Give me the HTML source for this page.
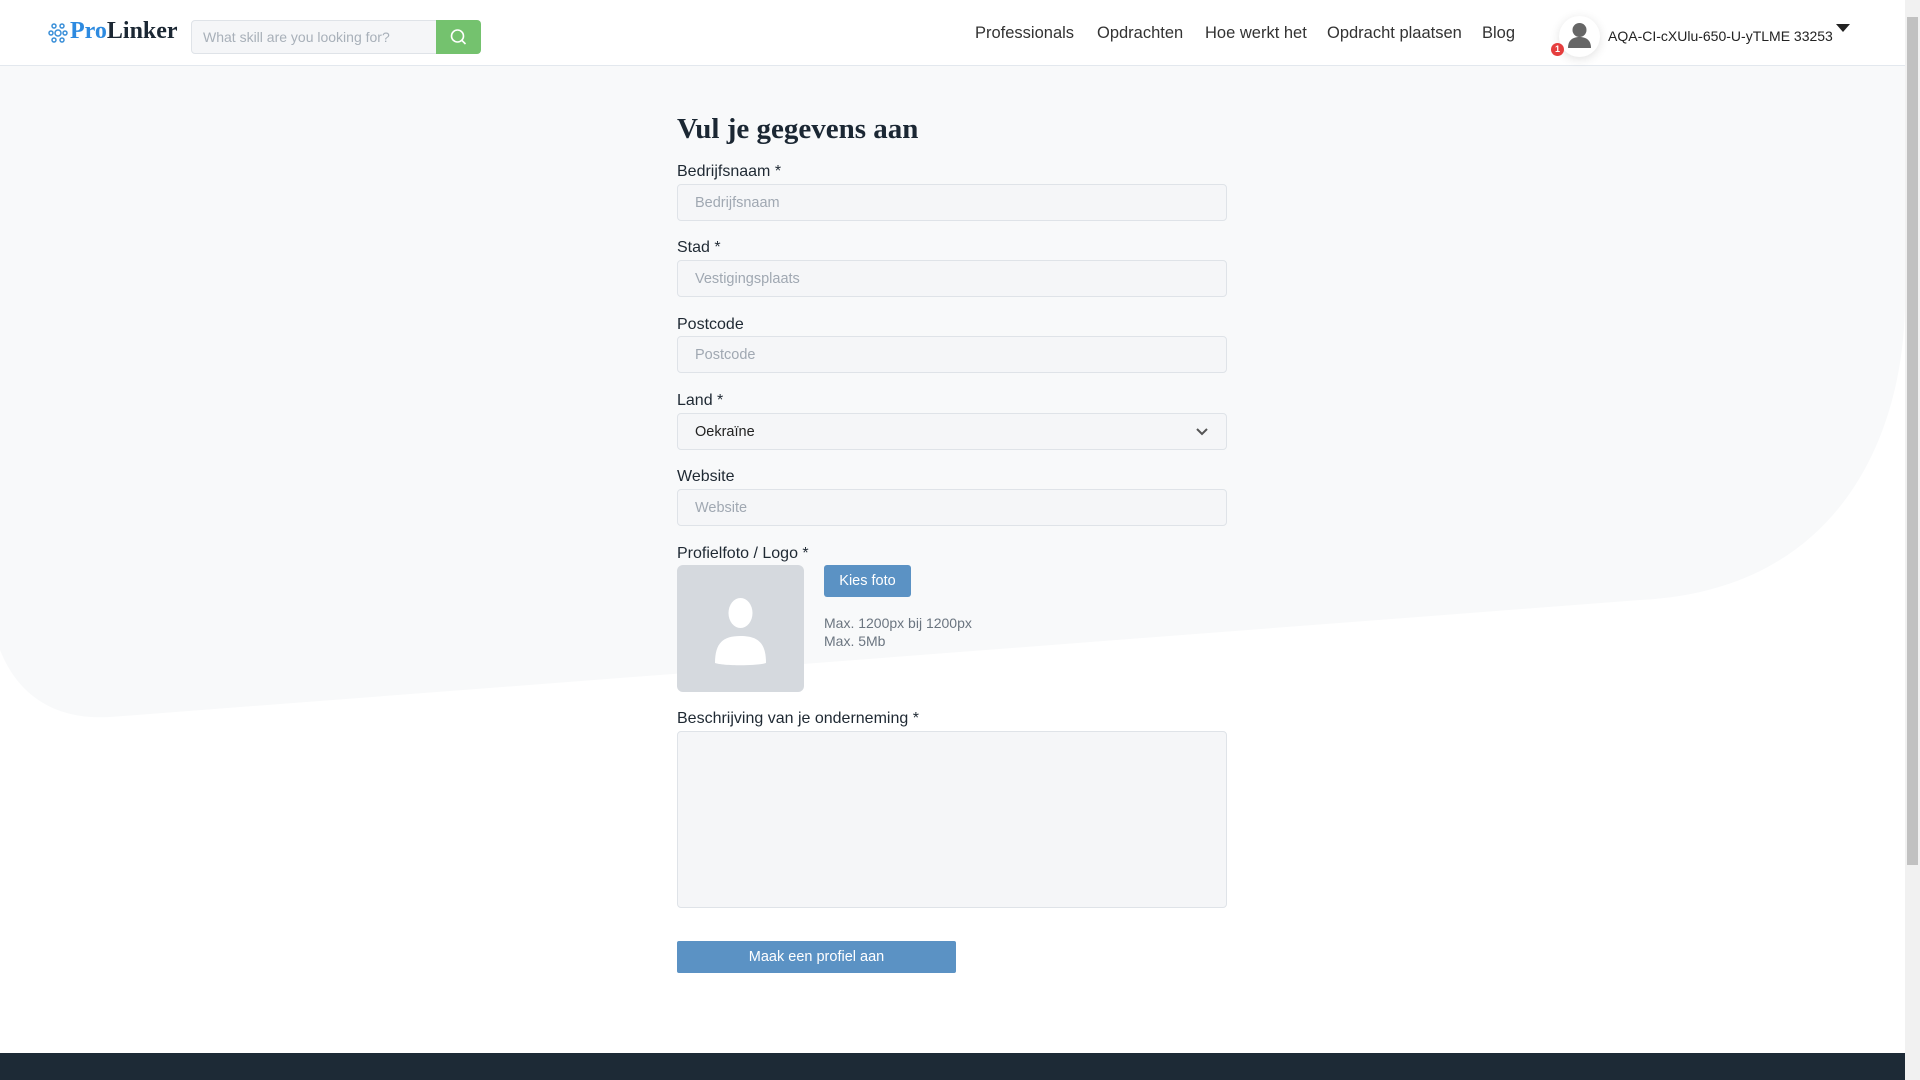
<!DOCTYPE html>
<html><head><meta charset="utf-8"><style>
body{margin:0;width:1920px;height:1080px;overflow:hidden;background:#fff;font-family:"Liberation Sans",sans-serif;position:relative;color:#1f2933}
.hdr{position:absolute;left:0;top:0;width:1905px;height:65px;background:#fff;border-bottom:1px solid #e3e8ee;z-index:2}
.abs{position:absolute}
.lbl{position:absolute;left:677px;font-size:16px;color:#1f2933}
.inp{position:absolute;left:677px;background:#f5f6f8;border:1px solid #dfe3e8;border-radius:4px;font-size:14.5px;color:#a0a8b2;line-height:37px;padding-left:17px;box-sizing:border-box;width:550px;height:37px}
.nav{position:absolute;top:24px;font-size:16.5px;color:#333}
</style></head><body>
<svg class="abs" style="left:0;top:0" width="1920" height="1080"><path d="M0 66 H1905 V300 C1905 420 1850 590 1640 600 L110 717 C60 720 20 700 0 650 Z" fill="#f8f9fa"/></svg>
<div class="hdr">
 <svg class="abs" style="left:47px;top:22px" width="22" height="22" viewBox="0 0 22 22" fill="none" stroke="#3a8fd8" stroke-width="1.5"><circle cx="11" cy="11" r="3"/><circle cx="4" cy="11" r="2"/><circle cx="18" cy="11" r="2"/><circle cx="7" cy="4" r="2"/><circle cx="15" cy="4" r="2"/><circle cx="7" cy="18" r="2"/><circle cx="15" cy="18" r="2"/></svg>
 <div class="abs" style="left:70px;top:18px;font-family:'Liberation Serif',serif;font-weight:bold;font-size:24px"><span style="color:#2d8ae0">Pro</span><span style="color:#1b2733">Linker</span></div>
 <div class="abs" style="left:191px;top:20px;width:246px;height:34px;background:#f5f6f8;border:1px solid #dfe3e8;border-radius:4px 0 0 4px;box-sizing:border-box;font-size:14px;color:#a8b0b9;line-height:32px;padding-left:11px">What skill are you looking for?</div>
 <div class="abs" style="left:436px;top:20px;width:45px;height:34px;background:#74c26e;border-radius:0 4px 4px 0"><svg width="45" height="34"><circle cx="21.5" cy="16" r="6" fill="none" stroke="#fff" stroke-width="1.6"/><path d="M26 20.5l3.5 3.5" stroke="#fff" stroke-width="1.6"/></svg></div>
 <div class="nav" style="left:975px">Professionals</div>
 <div class="nav" style="left:1097px">Opdrachten</div>
 <div class="nav" style="left:1205px">Hoe werkt het</div>
 <div class="nav" style="left:1327px">Opdracht plaatsen</div>
 <div class="nav" style="left:1482px">Blog</div>
 <div class="abs" style="left:1559px;top:16px;width:41px;height:41px;border-radius:50%;background:#fff;box-shadow:0 2px 10px rgba(0,0,0,.12)"><svg width="41" height="41"><circle cx="20.5" cy="14" r="7" fill="#666"/><path d="M9 32c0-8 5-11 11.5-11S32 24 32 32z" fill="#666"/></svg></div>
 <div class="abs" style="left:1551px;top:43px;width:13px;height:13px;border-radius:50%;background:#e53e3e;color:#fff;font-size:9px;text-align:center;line-height:13px;font-weight:bold">1</div>
 <div class="abs" style="left:1608px;top:28px;font-size:14px;color:#222">AQA-CI-cXUlu-650-U-yTLME 33253</div>
 <svg class="abs" style="left:1836px;top:24px" width="14" height="9"><path d="M0 0h14L7 8z" fill="#222"/></svg>
</div>
<div class="abs" style="left:1905px;top:0;width:15px;height:1080px;background:#f1f1f1"><div style="position:absolute;left:2px;top:17px;width:11px;height:848px;background:#c1c1c1"></div></div>
<div class="abs" style="left:677px;top:113px;font-family:'Liberation Serif',serif;font-weight:bold;font-size:29px;color:#1b2733">Vul je gegevens aan</div>
<div class="lbl" style="top:163px">Bedrijfsnaam *</div><div class="inp" style="top:184px">Bedrijfsnaam</div>
<div class="lbl" style="top:239px">Stad *</div><div class="inp" style="top:260px">Vestigingsplaats</div>
<div class="lbl" style="top:316px">Postcode</div><div class="inp" style="top:336px">Postcode</div>
<div class="lbl" style="top:392px">Land *</div><div class="inp" style="top:413px;color:#222">Oekraïne<svg style="position:absolute;right:18px;top:14px" width="12" height="8"><path d="M1 1l5 5 5-5" fill="none" stroke="#555" stroke-width="2"/></svg></div>
<div class="lbl" style="top:468px">Website</div><div class="inp" style="top:489px">Website</div>
<div class="lbl" style="top:545px">Profielfoto / Logo *</div>
<div class="abs" style="left:677px;top:565px;width:127px;height:127px;background:#d5d9de;border-radius:6px"><svg width="127" height="127"><ellipse cx="63.5" cy="48" rx="12" ry="15" fill="#fff"/><path d="M38 98c0-20 8-27 25.5-27S89 78 89 98c-8 3-43 3-51 0z" fill="#fff"/></svg></div>
<div class="abs" style="left:824px;top:565px;width:87px;height:32px;background:#5b92c4;border-radius:3px;color:#fff;font-size:14.5px;text-align:center;line-height:32px">Kies foto</div>
<div class="abs" style="left:824px;top:614px;font-size:14px;color:#6b7580;line-height:18px">Max. 1200px bij 1200px<br>Max. 5Mb</div>
<div class="lbl" style="top:710px">Beschrijving van je onderneming *</div>
<div class="inp" style="top:731px;height:177px"></div>
<div class="abs" style="left:677px;top:941px;width:279px;height:32px;background:#5b92c4;border-radius:2px;color:#fff;font-size:14.5px;text-align:center;line-height:33px">Maak een profiel aan</div>
<div class="abs" style="left:0;top:1053px;width:1905px;height:27px;background:#1d2a36"></div>
</body></html>
